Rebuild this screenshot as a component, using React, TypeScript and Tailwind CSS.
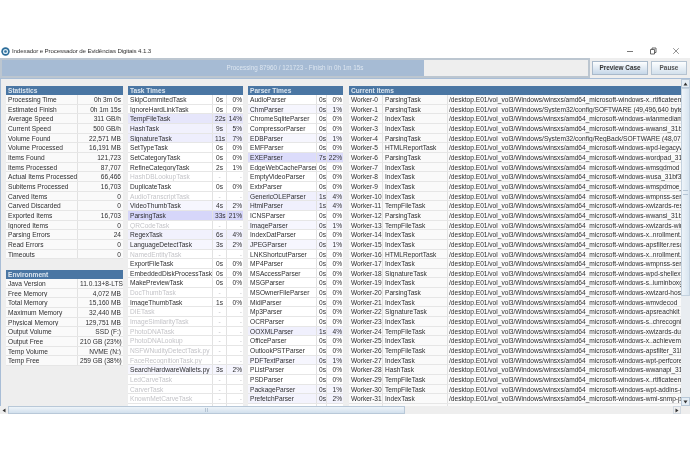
import React from "react";

const stats: [string, string][] = [
  ["Processing Time", "0h 3m 0s"],
  ["Estimated Finish", "0h 1m 15s"],
  ["Average Speed", "311 GB/h"],
  ["Current Speed", "500 GB/h"],
  ["Volume Found", "22,571 MB"],
  ["Volume Processed", "16,191 MB"],
  ["Items Found", "121,723"],
  ["Items Processed", "87,707"],
  ["Actual Items Processed", "66,466"],
  ["Subitems Processed", "16,703"],
  ["Carved Items", "0"],
  ["Carved Discarded", "0"],
  ["Exported Items", "16,703"],
  ["Ignored Items", "0"],
  ["Parsing Errors", "24"],
  ["Read Errors", "0"],
  ["Timeouts", "0"],
];
const env: [string, string][] = [
  ["Java Version", "11.0.13+8-LTS"],
  ["Free Memory", "4,072 MB"],
  ["Total Memory", "15,160 MB"],
  ["Maximum Memory", "32,440 MB"],
  ["Physical Memory", "129,751 MB"],
  ["Output Volume", "SSD (F:)"],
  ["Output Free", "210 GB (23%)"],
  ["Temp Volume", "NVME (N:)"],
  ["Temp Free", "259 GB (38%)"],
];
const tasks: [string, string, string, string?][] = [
  ["SkipCommitedTask", "0s", "0%"],
  ["IgnoreHardLinkTask", "0s", "0%"],
  ["TempFileTask", "22s", "14%", "bg-[#e6e6fb]"],
  ["HashTask", "9s", "5%", "bg-[#f1f1fd]"],
  ["SignatureTask", "11s", "7%", "bg-[#eeeefd]"],
  ["SetTypeTask", "0s", "0%"],
  ["SetCategoryTask", "0s", "0%"],
  ["RefineCategoryTask", "2s", "1%"],
  ["HashDBLookupTask", "-", "-", "off"],
  ["DuplicateTask", "0s", "0%"],
  ["AudioTranscriptTask", "-", "-", "off"],
  ["VideoThumbTask", "4s", "2%", "bg-[#f6f6fe]"],
  ["ParsingTask", "33s", "21%", "bg-[#d6d6fa]"],
  ["QRCodeTask", "-", "-", "off"],
  ["RegexTask", "6s", "4%", "bg-[#f1f1fd]"],
  ["LanguageDetectTask", "3s", "2%", "bg-[#f6f6fe]"],
  ["NamedEntityTask", "-", "-", "off"],
  ["ExportFileTask", "0s", "0%"],
  ["EmbeddedDiskProcessTask", "0s", "0%"],
  ["MakePreviewTask", "0s", "0%"],
  ["DocThumbTask", "-", "-", "off"],
  ["ImageThumbTask", "1s", "0%"],
  ["DIETask", "-", "-", "off"],
  ["ImageSimilarityTask", "-", "-", "off"],
  ["PhotoDNATask", "-", "-", "off"],
  ["PhotoDNALookup", "-", "-", "off"],
  ["NSFWNudityDetectTask.py", "-", "-", "off"],
  ["FaceRecognitionTask.py", "-", "-", "off"],
  ["SearchHardwareWallets.py", "3s", "2%", "bg-[#f6f6fe]"],
  ["LedCarveTask", "-", "-", "off"],
  ["CarverTask", "-", "-", "off"],
  ["KnownMetCarveTask", "-", "-", "off"],
  ["FragmentLargeBinaryTask", "0s", "0%"],
];
const parsers: [string, string, string, string?][] = [
  ["AudioParser", "0s", "0%"],
  ["ChmParser", "0s", "1%", "bg-[#f6f6fe]"],
  ["ChromeSqliteParser", "0s", "0%"],
  ["CompressorParser", "0s", "0%"],
  ["EDBParser", "0s", "1%", "bg-[#f6f6fe]"],
  ["EMFParser", "0s", "0%"],
  ["EXEParser", "7s", "22%", "bg-[#dcdcfb]"],
  ["EdgeWebCacheParser", "0s", "0%"],
  ["EmptyVideoParser", "0s", "0%"],
  ["ExtxParser", "0s", "0%"],
  ["GenericOLEParser", "1s", "4%", "bg-[#f0f0fd]"],
  ["HtmlParser", "1s", "4%", "bg-[#f0f0fd]"],
  ["ICNSParser", "0s", "0%"],
  ["ImageParser", "0s", "1%", "bg-[#f6f6fe]"],
  ["IndexDatParser", "0s", "0%"],
  ["JPEGParser", "0s", "1%", "bg-[#f6f6fe]"],
  ["LNKShortcutParser", "0s", "0%"],
  ["MP4Parser", "0s", "0%"],
  ["MSAccessParser", "0s", "0%"],
  ["MSGParser", "0s", "0%"],
  ["MSOwnerFileParser", "0s", "0%"],
  ["MidiParser", "0s", "0%"],
  ["Mp3Parser", "0s", "0%"],
  ["OCRParser", "0s", "0%"],
  ["OOXMLParser", "1s", "4%", "bg-[#f0f0fd]"],
  ["OfficeParser", "0s", "0%"],
  ["OutlookPSTParser", "0s", "0%"],
  ["PDFTextParser", "0s", "1%", "bg-[#f6f6fe]"],
  ["PListParser", "0s", "0%"],
  ["PSDParser", "0s", "0%"],
  ["PackageParser", "0s", "1%", "bg-[#f6f6fe]"],
  ["PrefetchParser", "0s", "2%", "bg-[#f3f3fd]"],
  ["RFC822Parser", "0s", "0%"],
];
const sxs = "/desktop.E01/vol_vol3/Windows/winsxs/amd64_microsoft-windows-";
const items: [string, string][] = [
  ["ParsingTask", sxs + "x..rtificateenrollment"],
  ["ParsingTask", "/desktop.E01/vol_vol3/Windows/System32/config/SOFTWARE (49,496,640 bytes)"],
  ["IndexTask", sxs + "wlanmediamanager"],
  ["IndexTask", sxs + "wwansi_31bf3856ad"],
  ["ParsingTask", "/desktop.E01/vol_vol3/Windows/System32/config/RegBack/SOFTWARE (48,070,656 bytes)"],
  ["HTMLReportTask", sxs + "wpd-legacywmdm"],
  ["ParsingTask", sxs + "wordpad_31bf3856"],
  ["IndexTask", sxs + "wmsgdmod_31bf"],
  ["IndexTask", sxs + "wusa_31bf3856ad36"],
  ["IndexTask", sxs + "wmspdmoe_31bf"],
  ["IndexTask", sxs + "wmpnss-service"],
  ["TempFileTask", sxs + "xwizards-res"],
  ["ParsingTask", sxs + "wwansi_31bf3856"],
  ["TempFileTask", sxs + "xwizards-win"],
  ["IndexTask", sxs + "x..nrollment.resources"],
  ["IndexTask", sxs + "apsfilter.resources"],
  ["HTMLReportTask", sxs + "x..nrollment.resources"],
  ["IndexTask", sxs + "wmpnss-service"],
  ["SignatureTask", sxs + "wpd-shellext"],
  ["IndexTask", sxs + "s..iuminboxgames"],
  ["ParsingTask", sxs + "xwizard-host"],
  ["IndexTask", sxs + "wmvdecod_31bf"],
  ["SignatureTask", sxs + "apsreachkit"],
  ["IndexTask", sxs + "s..chrecognizer"],
  ["TempFileTask", sxs + "xwizards-dui"],
  ["IndexTask", sxs + "x..achievements"],
  ["TempFileTask", sxs + "apsfilter_31bf"],
  ["IndexTask", sxs + "wpt-perfcore"],
  ["HashTask", sxs + "wwanapi_31bf"],
  ["TempFileTask", sxs + "x..rtificateenrollment"],
  ["TempFileTask", sxs + "wpt-addins-perf"],
  ["IndexTask", sxs + "wmi-snmp-provider"],
  ["LanguageDetectTask", sxs + "wpt-core"],
];

const ROW = "flex h-[9.67px] shrink-0 leading-[9.67px] border-b border-[#e6e6e6]";
const CELL = "overflow-hidden whitespace-nowrap px-[2px] border-r border-[#e2e2e2]";

function Head({ title }: { title: string }) {
  return (
    <div className="h-[9px] shrink-0 bg-[#4a76a3] text-[#dbe5ef] leading-[9px] px-[2px] font-semibold">
      {title}
    </div>
  );
}

function KV({ title, rows }: { title: string; rows: [string, string][] }) {
  return (
    <div className="flex w-[117px] flex-col">
      <Head title={title} />
      {rows.map(([k, v]) => (
        <div key={k} className={ROW + " bg-[#fafafa]"}>
          <div className={CELL + " w-[72px] shrink-0"}>{k}</div>
          <div className="flex-1 overflow-hidden whitespace-nowrap px-[2px] text-right">{v}</div>
        </div>
      ))}
    </div>
  );
}

function Times({
  title,
  rows,
  w,
  c1,
  c2,
}: {
  title: string;
  rows: [string, string, string, string?][];
  w: string;
  c1: string;
  c2: string;
}) {
  return (
    <div className={"flex flex-col " + w}>
      <Head title={title} />
      {rows.map(([n, s, p, k]) => (
        <div
          key={n}
          className={
            ROW + " " + (k === "off" ? "bg-white text-[#c4c4c8]" : k ? k : "bg-white")
          }
        >
          <div className={CELL + " flex-1"}>{n}</div>
          <div className={CELL + " shrink-0 text-center " + c1}>{s}</div>
          <div className={"shrink-0 overflow-hidden px-[1px] text-right " + c2}>{p}</div>
        </div>
      ))}
    </div>
  );
}

export default function App() {
  return (
    <div className="flex h-[460px] w-[690px] flex-col overflow-hidden bg-white pt-[44px] text-[#2e2e30] text-[6.6px] blur-[0.4px] [font-family:'Liberation_Sans',Arial,sans-serif]">
      {/* Title bar */}
      <div className="flex h-[14px] shrink-0 items-center pl-[1px]">
        <svg width="9" height="9" viewBox="0 0 9 9" className="shrink-0">
          <circle cx="4.5" cy="4.5" r="4.2" fill="#2c6d9a" />
          <circle cx="4.5" cy="4.5" r="2.6" fill="#dcecf5" />
          <circle cx="4.5" cy="4.5" r="1.3" fill="#2f6f9c" />
        </svg>
        <span className="ml-[2px] text-[6.2px] tracking-[-0.15px] text-[#333]">
          Indexador e Processador de Evidências Digitais 4.1.3
        </span>
        <div className="ml-auto flex items-center gap-[15px] pr-[10px] text-[#555]">
          <svg width="8" height="8" viewBox="0 0 8 8">
            <path d="M1 4.5H7" stroke="#555" strokeWidth="0.8" />
          </svg>
          <svg width="8" height="8" viewBox="0 0 8 8" fill="none">
            <path d="M1.5 2.5H5.5V7H1.5Z M3 2.5V1H7V5.5H5.5" stroke="#444" strokeWidth="0.8" />
          </svg>
          <svg width="8" height="8" viewBox="0 0 8 8">
            <path d="M1.2 1.2L6.8 6.8M6.8 1.2L1.2 6.8" stroke="#666" strokeWidth="0.7" />
          </svg>
        </div>
      </div>

      {/* Progress row */}
      <div className="flex h-[20px] shrink-0 items-center bg-[#eeeeee]">
        <div className="relative h-[20px] w-[590px] shrink-0 border-2 border-[#bcc6d0] bg-[#eeeeee]">
          <div className="absolute inset-y-0 left-0 w-[422px] bg-[#a6bbd4]" />
          <div className="absolute inset-0 flex items-center justify-center text-[6.3px] text-[#dde6f0]">
            Processing 87960 / 121723 - Finish in 0h 1m 15s
          </div>
        </div>
        <button className="ml-[2px] h-[14px] w-[56px] border border-[#a9b9ca] bg-gradient-to-b from-[#fdfeff] to-[#c6d7e8] text-[6.4px] text-[#333] font-semibold">
          Preview Case
        </button>
        <button className="ml-[3px] h-[14px] w-[36px] border border-[#b5c3d1] bg-gradient-to-b from-[#fdfeff] to-[#d3e0ec] text-[6.4px] text-[#555] font-semibold">
          Pause
        </button>
      </div>

      {/* Scroll pane */}
      <div className="flex h-[328px] shrink-0 border-t border-l border-[#a8bdd6] bg-[#eeeeee]">
        <div className="flex min-w-0 flex-1 gap-[5px] overflow-hidden pl-[5px] pt-[7px]">
          <div className="flex w-[117px] shrink-0 flex-col gap-[11px]">
            <KV title="Statistics" rows={stats} />
            <KV title="Environment" rows={env} />
          </div>
          <Times title="Task Times" rows={tasks} w="w-[115px] shrink-0" c1="w-[14px]" c2="w-[16px]" />
          <Times title="Parser Times" rows={parsers} w="w-[95px] shrink-0" c1="w-[10px]" c2="w-[16px]" />
          <div className="ml-[1px] flex w-[335px] shrink-0 flex-col">
            <Head title="Current Items" />
            {items.map(([t, p], i) => (
              <div key={i} className={ROW + " bg-[#fafafa]"}>
                <div className={CELL + " w-[34px] shrink-0"}>Worker-{i}</div>
                <div className={CELL + " w-[65px] shrink-0"}>{t}</div>
                <div className="flex-1 overflow-hidden whitespace-nowrap px-[1px]">{p}</div>
              </div>
            ))}
          </div>
        </div>
        {/* Vertical scrollbar */}
        <div className="flex w-[9px] shrink-0 flex-col bg-[#e6eef5]">
          <div className="flex h-[9px] shrink-0 items-center justify-center border border-[#b8c8d8] bg-[#e4edf5] text-[#333]">
            <svg width="5" height="4" viewBox="0 0 5 4"><path d="M2.5 0.5L4.5 3.5H0.5Z" fill="#333" /></svg>
          </div>
          <div className="flex h-[208px] shrink-0 items-center justify-center border border-[#c4d2df] bg-gradient-to-r from-[#eef4f9] to-[#d8e5f0]">
            <div className="h-[5px] w-[5px] border-y border-[#b5c5d5]" />
          </div>
          <div className="flex-1 bg-[#e9edf1]" />
          <div className="flex h-[9px] shrink-0 items-center justify-center border border-[#b8c8d8] bg-[#e4edf5]">
            <svg width="5" height="4" viewBox="0 0 5 4"><path d="M2.5 3.5L4.5 0.5H0.5Z" fill="#333" /></svg>
          </div>
        </div>
      </div>

      {/* Horizontal scrollbar */}
      <div className="flex h-[8px] shrink-0 bg-[#eeeeee]">
        <div className="flex w-[8px] items-center justify-center">
          <svg width="4" height="5" viewBox="0 0 4 5"><path d="M0.5 2.5L3.5 0.5V4.5Z" fill="#333" /></svg>
        </div>
        <div className="flex w-[397px] items-center justify-center border border-[#b8c8d8] bg-gradient-to-b from-[#eef4f9] to-[#d2e0ed]">
          <div className="h-[4px] w-[3px] border-x border-[#b5c5d5]" />
        </div>
        <div className="flex-1" />
        <div className="mr-[9px] flex w-[8px] items-center justify-center border border-[#d0d8e0]">
          <svg width="4" height="5" viewBox="0 0 4 5"><path d="M3.5 2.5L0.5 0.5V4.5Z" fill="#333" /></svg>
        </div>
      </div>
    </div>
  );
}
